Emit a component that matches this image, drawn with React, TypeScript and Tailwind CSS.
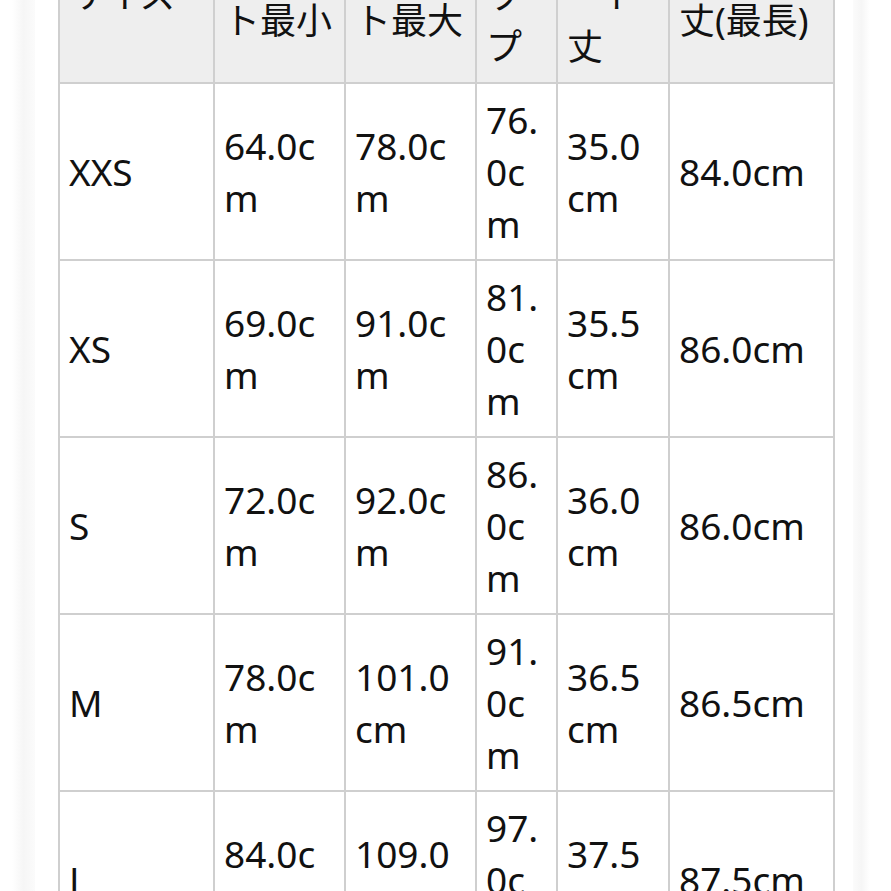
const headers: string[][] = [
    ["サイズ"],
    ["ウエス", "ト最小"],
    ["ウエス", "ト最大"],
    ["ヒ", "ッ", "プ"],
    ["スカ", "ート", "丈"],
    ["総", "丈(最長)"],
]

const rows: string[][] = [
    ["XXS", "64.0cm", "78.0cm", "76.0cm", "35.0cm", "84.0cm"],
    ["XS", "69.0cm", "91.0cm", "81.0cm", "35.5cm", "86.0cm"],
    ["S", "72.0cm", "92.0cm", "86.0cm", "36.0cm", "86.0cm"],
    ["M", "78.0cm", "101.0cm", "91.0cm", "36.5cm", "86.5cm"],
    ["L", "84.0cm", "109.0cm", "97.0cm", "37.5cm", "87.5cm"],
]

export default function App() {
    return (
        <div className="flex min-h-[891px] w-full overflow-hidden bg-white text-[#111] font-['Noto_Sans','Noto_Sans_CJK_JP',sans-serif]">
            <div className="w-[12px] shrink-0" />
            <div className="w-[23px] shrink-0 bg-gradient-to-r from-white via-[#f6f6f6] to-[#fbfbfb]" />
            <div className="w-[23px] shrink-0" />

            <div className="shrink-0 -mt-[95px]">
                <div className="grid grid-cols-[155px_131px_131px_81px_112px_165px] border-l-2 border-t-2 border-[#cfcfcf] leading-[52px]">
                    {headers.map((lines, i) => (
                        <div key={i} className="flex items-center bg-[#eeeeee] pl-[9px] pr-[11px] py-[9.5px] border-r-2 border-b-2 border-[#cfcfcf] text-[36px] whitespace-nowrap">
                            <div>
                                {lines.map((l, j) => <div key={j}>{l}</div>)}
                            </div>
                        </div>
                    ))}
                    {rows.map((row, r) => row.map((cell, c) => (
                        <div key={`${r}-${c}`} className="flex items-center bg-white pl-[9px] pr-[11px] py-[9.5px] border-r-2 border-b-2 border-[#cfcfcf] min-h-[177px] text-[37px]">
                            <div className="break-all w-full">{cell}</div>
                        </div>
                    )))}
                </div>
            </div>

            <div className="w-[18px] shrink-0" />
            <div className="w-[17px] shrink-0 bg-gradient-to-r from-[#fbfbfb] via-[#f6f6f6] to-white" />
            <div className="flex-1" />
        </div>
    )
}
